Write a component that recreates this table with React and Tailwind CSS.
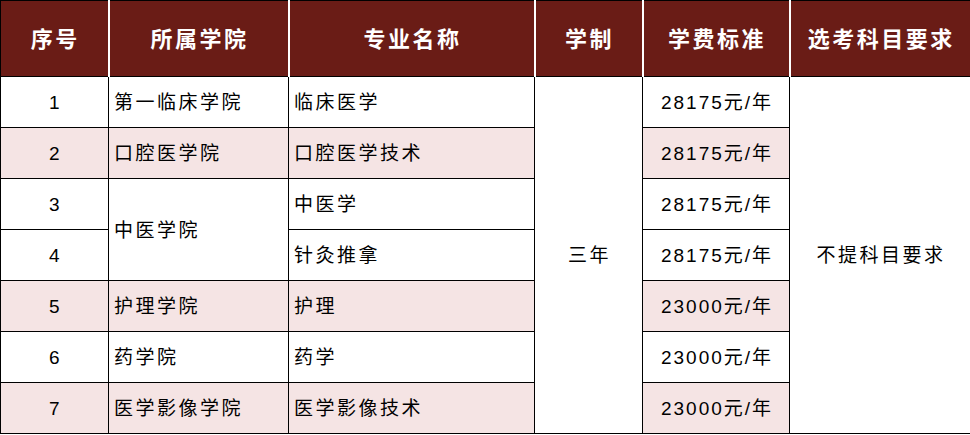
import React from 'react';

const FONT = { fontFamily: '"Liberation Sans", "Noto Sans CJK SC", sans-serif' };

const HEADERS = ['序号', '所属学院', '专业名称', '学制', '学费标准', '选考科目要求'];

const ROWS = [
  { no: 1, college: '第一临床学院', major: '临床医学', fee: '28175元/年', pink: false },
  { no: 2, college: '口腔医学院', major: '口腔医学技术', fee: '28175元/年', pink: true },
  { no: 3, college: '中医学院', collegeSpan: 2, major: '中医学', fee: '28175元/年', pink: false },
  { no: 4, major: '针灸推拿', fee: '28175元/年', pink: false },
  { no: 5, college: '护理学院', major: '护理', fee: '23000元/年', pink: true },
  { no: 6, college: '药学院', major: '药学', fee: '23000元/年', pink: false },
  { no: 7, college: '医学影像学院', major: '医学影像技术', fee: '23000元/年', pink: true },
];

const td = 'h-[51px] border border-black text-[19px] tracking-[2.5px] text-black p-0 pt-[3px]';

export default function App() {
  return (
    <div className="w-[970px] h-[435px] bg-white" style={FONT}>
      <table className="table-fixed border-collapse w-[970px]">
        <colgroup>
          <col className="w-[108px]" />
          <col className="w-[180px]" />
          <col className="w-[246px]" />
          <col className="w-[108px]" />
          <col className="w-[147px]" />
          <col className="w-[181px]" />
        </colgroup>
        <thead>
          <tr>
            {HEADERS.map((h, i) => (
              <th
                key={h}
                className={`h-[76px] bg-[#6a1c16] text-white text-[22px] tracking-[2.5px] font-bold border-t border-t-black border-b border-b-black p-0 pl-[2px] pt-[2px] ${
                  i === 0 ? 'border-l border-l-black' : 'border-l-2 border-l-white'
                } ${i === HEADERS.length - 1 ? 'border-r border-r-black' : ''}`}
              >
                {h}
              </th>
            ))}
          </tr>
        </thead>
        <tbody>
          {ROWS.map((r, idx) => {
            const bg = r.pink ? 'bg-[#f5e4e4]' : 'bg-white';
            return (
              <tr key={r.no}>
                <td className={`${td} ${bg} text-center pl-[2px]`}>{r.no}</td>
                {r.college && (
                  <td rowSpan={r.collegeSpan || 1} className={`${td} ${bg} text-left pl-[5px]`}>
                    {r.college}
                  </td>
                )}
                <td className={`${td} ${bg} text-left pl-[5px]`}>{r.major}</td>
                {idx === 0 && (
                  <td rowSpan={7} className={`${td} bg-white text-center pl-[2px]`}>三年</td>
                )}
                <td className={`${td} ${bg} text-center pl-[2px] tracking-[2px]`}>{r.fee}</td>
                {idx === 0 && (
                  <td rowSpan={7} className={`${td} bg-white text-center pl-[2px]`}>不提科目要求</td>
                )}
              </tr>
            );
          })}
        </tbody>
      </table>
    </div>
  );
}
